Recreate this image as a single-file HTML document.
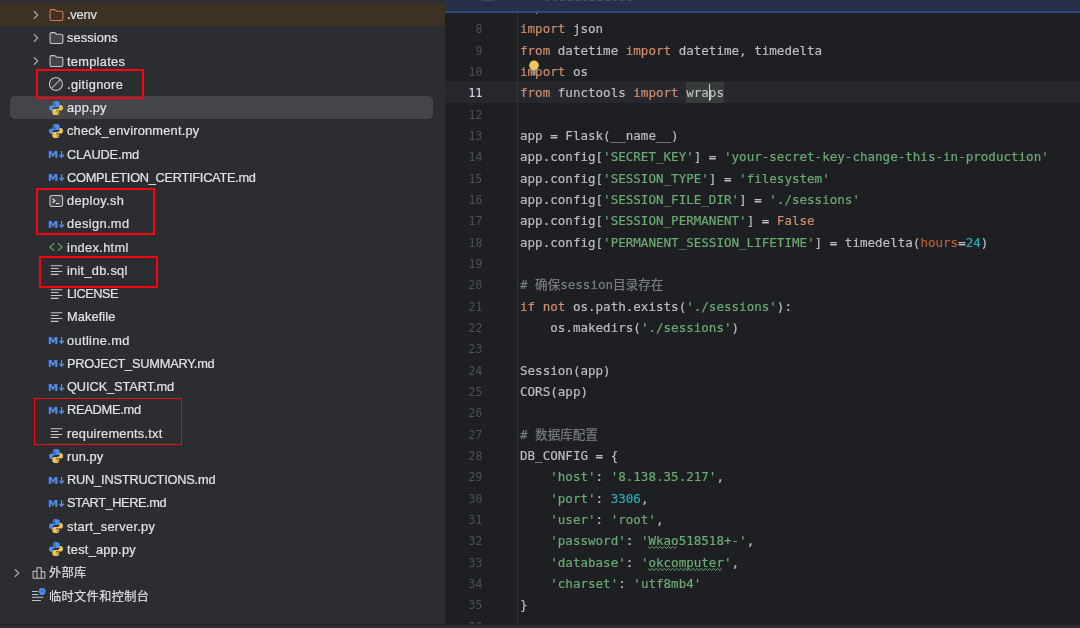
<!DOCTYPE html>
<html lang="zh-CN">
<head>
<meta charset="utf-8">
<title>app.py</title>
<style>
html,body{margin:0;padding:0;}
body{width:1080px;height:628px;overflow:hidden;position:relative;background:#2b2d30;
 font-family:"Liberation Sans","Noto Sans CJK SC",sans-serif;}
.abs{position:absolute;}
#tree{position:absolute;left:0;top:0;width:445px;height:628px;background:#2b2d30;overflow:hidden;}
#editor{position:absolute;left:445px;top:0;width:635px;height:628px;background:#1e1f22;overflow:hidden;}
.row{position:absolute;left:0;width:445px;height:23.25px;}
.row svg{position:absolute;top:3.625px;overflow:visible;}
.row span{position:absolute;top:0.1px;line-height:23.25px;font-size:12.8px;color:#dfe1e5;white-space:nowrap;-webkit-text-stroke:0.22px #dfe1e5;will-change:transform;}
.row span.cjk{font-size:12.200px;letter-spacing:0.350px;-webkit-text-stroke:0.150px #dfe1e5;top:1.300px;}
.box{position:absolute;border:2.200px solid #fc0010;box-sizing:border-box;}
.ln{position:absolute;left:0;width:37.400px;text-align:right;font-family:"DejaVu Sans Mono","Liberation Mono",monospace;font-size:11.400px;letter-spacing:0.150px;color:#4b5059;height:21.333px;line-height:21.333px;margin-top:1.8px;will-change:transform;}
.cl{position:absolute;left:75.3px;height:21.333px;line-height:21.333px;margin-top:0.6px;white-space:pre;font-family:"DejaVu Sans Mono","Liberation Mono","Noto Sans CJK SC",monospace;font-size:12.558px;color:#bcbec4;-webkit-text-stroke:0.180px;will-change:transform;}
.k{color:#cf8e6d}.s{color:#6aab73}.n{color:#2aacb8}.c{color:#7a7e85}.p{color:#ba6134}
.t{position:relative;display:inline-block;color:#6aab73}
.t svg{position:absolute;left:0;top:16.100px;overflow:visible}
</style>
</head>
<body>
<div id="tree">
<div class="abs" style="left:0;top:2.900px;width:445px;height:23px;background:#3d3124;"></div>
<div class="abs" style="left:9.600px;top:96.300px;width:423.400px;height:22.700px;background:#43454a;border-radius:5px;"></div>
<div class="row" style="top:3.03px"><svg style="left:27.6px" width="16" height="16" viewBox="0 0 16 16"><path d="M5.900 4.250L9.700 8 5.900 11.750" fill="none" stroke="#a3a6ad" stroke-width="1.250"/></svg><svg style="left:48.60px" width="16" height="16" viewBox="0 0 16 16"><path d="M1.05 4.2c0-.9.7-1.6 1.6-1.6h2.6c.45 0 .9.2 1.2.5l.9.9c.15.15.35.25.55.25h4.35c.9 0 1.6.7 1.6 1.6v6.05c0 .9-.7 1.6-1.6 1.6H2.65c-.9 0-1.6-.7-1.6-1.6z" fill="#432f28" stroke="#c97c50" stroke-width="1.1"/></svg><span style="left:66.7px;letter-spacing:-0.202px">.venv</span></div>
<div class="row" style="top:26.27px"><svg style="left:27.6px" width="16" height="16" viewBox="0 0 16 16"><path d="M5.900 4.250L9.700 8 5.900 11.750" fill="none" stroke="#a3a6ad" stroke-width="1.250"/></svg><svg style="left:48.60px" width="16" height="16" viewBox="0 0 16 16"><path d="M1.05 4.2c0-.9.7-1.6 1.6-1.6h2.6c.45 0 .9.2 1.2.5l.9.9c.15.15.35.25.55.25h4.35c.9 0 1.6.7 1.6 1.6v6.05c0 .9-.7 1.6-1.6 1.6H2.65c-.9 0-1.6-.7-1.6-1.6z" fill="#43454a" stroke="#c3c6cc" stroke-width="1.1"/></svg><span style="left:66.7px;letter-spacing:0.116px">sessions</span></div>
<div class="row" style="top:49.52px"><svg style="left:27.6px" width="16" height="16" viewBox="0 0 16 16"><path d="M5.900 4.250L9.700 8 5.900 11.750" fill="none" stroke="#a3a6ad" stroke-width="1.250"/></svg><svg style="left:48.60px" width="16" height="16" viewBox="0 0 16 16"><path d="M1.05 4.2c0-.9.7-1.6 1.6-1.6h2.6c.45 0 .9.2 1.2.5l.9.9c.15.15.35.25.55.25h4.35c.9 0 1.6.7 1.6 1.6v6.05c0 .9-.7 1.6-1.6 1.6H2.65c-.9 0-1.6-.7-1.6-1.6z" fill="#43454a" stroke="#c3c6cc" stroke-width="1.1"/></svg><span style="left:66.7px;letter-spacing:0.293px">templates</span></div>
<div class="row" style="top:72.78px"><svg style="left:47.75px" width="16" height="16" viewBox="0 0 16 16"><circle cx="7.9" cy="8" r="6.5" fill="#36383c" stroke="#c3c6cc" stroke-width="1.05"/><path d="M3.4 12.5L12.4 3.5" stroke="#c3c6cc" stroke-width="1.05"/></svg><span style="left:66.7px;letter-spacing:0.350px">.gitignore</span></div>
<div class="row" style="top:96.03px"><svg style="left:47.75px" width="16" height="16" viewBox="0 0 16 16"><path d="M7.8 1c-2.3 0-3 1-3 2.100v1.700h3.200v.600H3.300C1.900 5.400 1 6.500 1 8.100c0 1.700.9 2.800 2.200 2.800h1.400V9.200c0-1.300 1.100-2.300 2.400-2.300h2.800c1.100 0 1.900-.9 1.900-1.900V3.100C11.700 2 10.600 1 7.800 1z" fill="#4a8df6"/><circle cx="6.200" cy="2.900" r=".7" fill="#2b2d30"/><path d="M8.200 15c2.300 0 3-1 3-2.100v-1.700H8v-.6h4.700c1.400 0 2.300-1.100 2.300-2.700 0-1.700-.9-2.800-2.200-2.800h-1.400v1.700c0 1.300-1.100 2.300-2.400 2.300H6.200c-1.100 0-1.900.9-1.900 1.900v1.900c0 1.100 1.100 2.100 3.900 2.100z" fill="#f0c356"/><circle cx="9.800" cy="13.100" r=".7" fill="#2b2d30"/></svg><span style="left:66.7px;letter-spacing:0.207px">app.py</span></div>
<div class="row" style="top:119.28px"><svg style="left:47.75px" width="16" height="16" viewBox="0 0 16 16"><path d="M7.8 1c-2.3 0-3 1-3 2.100v1.700h3.200v.600H3.300C1.900 5.400 1 6.500 1 8.100c0 1.700.9 2.800 2.200 2.800h1.400V9.200c0-1.300 1.100-2.300 2.400-2.300h2.800c1.100 0 1.900-.9 1.900-1.900V3.100C11.700 2 10.600 1 7.800 1z" fill="#4a8df6"/><circle cx="6.200" cy="2.900" r=".7" fill="#2b2d30"/><path d="M8.200 15c2.300 0 3-1 3-2.100v-1.700H8v-.6h4.700c1.400 0 2.300-1.100 2.300-2.700 0-1.700-.9-2.800-2.200-2.800h-1.400v1.700c0 1.300-1.100 2.300-2.400 2.300H6.200c-1.100 0-1.900.9-1.900 1.900v1.900c0 1.100 1.100 2.100 3.900 2.100z" fill="#f0c356"/><circle cx="9.800" cy="13.100" r=".7" fill="#2b2d30"/></svg><span style="left:66.7px;letter-spacing:0.218px">check_environment.py</span></div>
<div class="row" style="top:142.53px"><svg style="left:48.60px" width="16" height="16" viewBox="0 0 16 16"><text transform="translate(-0.95 11.85) scale(1.12 1)" font-family="DejaVu Sans, Liberation Sans, sans-serif" font-weight="700" font-size="9.200" fill="#4f8df5">M</text><path d="M12.600 4.900v6.300M10.300 8.800l2.300 2.400 2.300-2.400" fill="none" stroke="#4f8df5" stroke-width="1.300"/></svg><span style="left:66.7px;letter-spacing:-0.152px">CLAUDE.md</span></div>
<div class="row" style="top:165.78px"><svg style="left:48.60px" width="16" height="16" viewBox="0 0 16 16"><text transform="translate(-0.95 11.85) scale(1.12 1)" font-family="DejaVu Sans, Liberation Sans, sans-serif" font-weight="700" font-size="9.200" fill="#4f8df5">M</text><path d="M12.600 4.900v6.300M10.300 8.800l2.300 2.400 2.300-2.400" fill="none" stroke="#4f8df5" stroke-width="1.300"/></svg><span style="left:66.7px;letter-spacing:-0.285px">COMPLETION_CERTIFICATE.md</span></div>
<div class="row" style="top:189.03px"><svg style="left:47.75px" width="16" height="16" viewBox="0 0 16 16"><rect x="1.950" y="2.450" width="12.650" height="11.100" rx="2.200" fill="#43454a" stroke="#c3c6cc" stroke-width="1.100"/><path d="M4.600 5.700l2.300 2L4.600 9.700M7.900 10.500h3.400" fill="none" stroke="#e2e4e8" stroke-width="1.200"/></svg><span style="left:66.7px;letter-spacing:0.371px">deploy.sh</span></div>
<div class="row" style="top:212.28px"><svg style="left:48.60px" width="16" height="16" viewBox="0 0 16 16"><text transform="translate(-0.95 11.85) scale(1.12 1)" font-family="DejaVu Sans, Liberation Sans, sans-serif" font-weight="700" font-size="9.200" fill="#4f8df5">M</text><path d="M12.600 4.900v6.300M10.300 8.800l2.300 2.400 2.300-2.400" fill="none" stroke="#4f8df5" stroke-width="1.300"/></svg><span style="left:66.7px;letter-spacing:0.371px">design.md</span></div>
<div class="row" style="top:235.53px"><svg style="left:48.00px" width="16" height="16" viewBox="0 0 16 16"><path d="M6.200 4.300L1.800 8l4.400 3.700M9.800 4.300L14.200 8l-4.400 3.700" fill="none" stroke="#5a9a5f" stroke-width="1.250"/></svg><span style="left:66.7px;letter-spacing:0.330px">index.html</span></div>
<div class="row" style="top:258.77px"><svg style="left:48.50px" width="16" height="16" viewBox="0 0 16 16"><path d="M1.800 3.650h11.500M1.800 6.550h7.700M1.800 9.450h11.500M1.800 12.350h7.700" fill="none" stroke="#c3c6cc" stroke-width="1.050"/></svg><span style="left:66.7px;letter-spacing:0.270px">init_db.sql</span></div>
<div class="row" style="top:282.02px"><svg style="left:48.50px" width="16" height="16" viewBox="0 0 16 16"><path d="M1.800 3.650h11.500M1.800 6.550h7.700M1.800 9.450h11.500M1.800 12.350h7.700" fill="none" stroke="#c3c6cc" stroke-width="1.050"/></svg><span style="left:66.7px;letter-spacing:-0.555px">LICENSE</span></div>
<div class="row" style="top:305.27px"><svg style="left:48.50px" width="16" height="16" viewBox="0 0 16 16"><path d="M1.800 3.650h11.500M1.800 6.550h7.700M1.800 9.450h11.500M1.800 12.350h7.700" fill="none" stroke="#c3c6cc" stroke-width="1.050"/></svg><span style="left:66.7px;letter-spacing:0.103px">Makefile</span></div>
<div class="row" style="top:328.52px"><svg style="left:48.60px" width="16" height="16" viewBox="0 0 16 16"><text transform="translate(-0.95 11.85) scale(1.12 1)" font-family="DejaVu Sans, Liberation Sans, sans-serif" font-weight="700" font-size="9.200" fill="#4f8df5">M</text><path d="M12.600 4.900v6.300M10.300 8.800l2.300 2.400 2.300-2.400" fill="none" stroke="#4f8df5" stroke-width="1.300"/></svg><span style="left:66.7px;letter-spacing:0.370px">outline.md</span></div>
<div class="row" style="top:351.77px"><svg style="left:48.60px" width="16" height="16" viewBox="0 0 16 16"><text transform="translate(-0.95 11.85) scale(1.12 1)" font-family="DejaVu Sans, Liberation Sans, sans-serif" font-weight="700" font-size="9.200" fill="#4f8df5">M</text><path d="M12.600 4.900v6.300M10.300 8.800l2.300 2.400 2.300-2.400" fill="none" stroke="#4f8df5" stroke-width="1.300"/></svg><span style="left:66.7px;letter-spacing:-0.233px">PROJECT_SUMMARY.md</span></div>
<div class="row" style="top:375.02px"><svg style="left:48.60px" width="16" height="16" viewBox="0 0 16 16"><text transform="translate(-0.95 11.85) scale(1.12 1)" font-family="DejaVu Sans, Liberation Sans, sans-serif" font-weight="700" font-size="9.200" fill="#4f8df5">M</text><path d="M12.600 4.900v6.300M10.300 8.800l2.300 2.400 2.300-2.400" fill="none" stroke="#4f8df5" stroke-width="1.300"/></svg><span style="left:66.7px;letter-spacing:-0.090px">QUICK_START.md</span></div>
<div class="row" style="top:398.27px"><svg style="left:48.60px" width="16" height="16" viewBox="0 0 16 16"><text transform="translate(-0.95 11.85) scale(1.12 1)" font-family="DejaVu Sans, Liberation Sans, sans-serif" font-weight="700" font-size="9.200" fill="#4f8df5">M</text><path d="M12.600 4.900v6.300M10.300 8.800l2.300 2.400 2.300-2.400" fill="none" stroke="#4f8df5" stroke-width="1.300"/></svg><span style="left:66.7px;letter-spacing:-0.247px">README.md</span></div>
<div class="row" style="top:421.52px"><svg style="left:48.50px" width="16" height="16" viewBox="0 0 16 16"><path d="M1.800 3.650h11.500M1.800 6.550h7.700M1.800 9.450h11.500M1.800 12.350h7.700" fill="none" stroke="#c3c6cc" stroke-width="1.050"/></svg><span style="left:66.7px;letter-spacing:0.234px">requirements.txt</span></div>
<div class="row" style="top:444.77px"><svg style="left:47.75px" width="16" height="16" viewBox="0 0 16 16"><path d="M7.8 1c-2.3 0-3 1-3 2.100v1.700h3.200v.600H3.300C1.900 5.400 1 6.500 1 8.100c0 1.700.9 2.800 2.200 2.800h1.400V9.200c0-1.300 1.100-2.300 2.400-2.300h2.800c1.100 0 1.900-.9 1.900-1.900V3.100C11.700 2 10.600 1 7.800 1z" fill="#4a8df6"/><circle cx="6.200" cy="2.900" r=".7" fill="#2b2d30"/><path d="M8.200 15c2.300 0 3-1 3-2.100v-1.700H8v-.6h4.700c1.400 0 2.300-1.100 2.300-2.700 0-1.700-.9-2.800-2.200-2.800h-1.400v1.700c0 1.300-1.100 2.300-2.400 2.300H6.200c-1.100 0-1.900.9-1.900 1.900v1.900c0 1.100 1.100 2.100 3.900 2.100z" fill="#f0c356"/><circle cx="9.800" cy="13.100" r=".7" fill="#2b2d30"/></svg><span style="left:66.7px;letter-spacing:0.126px">run.py</span></div>
<div class="row" style="top:468.02px"><svg style="left:48.60px" width="16" height="16" viewBox="0 0 16 16"><text transform="translate(-0.95 11.85) scale(1.12 1)" font-family="DejaVu Sans, Liberation Sans, sans-serif" font-weight="700" font-size="9.200" fill="#4f8df5">M</text><path d="M12.600 4.900v6.300M10.300 8.800l2.300 2.400 2.300-2.400" fill="none" stroke="#4f8df5" stroke-width="1.300"/></svg><span style="left:66.7px;letter-spacing:-0.200px">RUN_INSTRUCTIONS.md</span></div>
<div class="row" style="top:491.27px"><svg style="left:48.60px" width="16" height="16" viewBox="0 0 16 16"><text transform="translate(-0.95 11.85) scale(1.12 1)" font-family="DejaVu Sans, Liberation Sans, sans-serif" font-weight="700" font-size="9.200" fill="#4f8df5">M</text><path d="M12.600 4.900v6.300M10.300 8.800l2.300 2.400 2.300-2.400" fill="none" stroke="#4f8df5" stroke-width="1.300"/></svg><span style="left:66.7px;letter-spacing:-0.439px">START_HERE.md</span></div>
<div class="row" style="top:514.52px"><svg style="left:47.75px" width="16" height="16" viewBox="0 0 16 16"><path d="M7.8 1c-2.3 0-3 1-3 2.100v1.700h3.200v.600H3.300C1.900 5.400 1 6.500 1 8.100c0 1.700.9 2.800 2.200 2.800h1.400V9.200c0-1.300 1.100-2.300 2.400-2.300h2.800c1.100 0 1.900-.9 1.900-1.900V3.100C11.700 2 10.600 1 7.800 1z" fill="#4a8df6"/><circle cx="6.200" cy="2.900" r=".7" fill="#2b2d30"/><path d="M8.200 15c2.300 0 3-1 3-2.100v-1.700H8v-.6h4.700c1.400 0 2.300-1.100 2.300-2.700 0-1.700-.9-2.800-2.200-2.800h-1.400v1.700c0 1.300-1.100 2.300-2.400 2.300H6.200c-1.100 0-1.900.9-1.900 1.900v1.900c0 1.100 1.100 2.100 3.900 2.100z" fill="#f0c356"/><circle cx="9.800" cy="13.100" r=".7" fill="#2b2d30"/></svg><span style="left:66.7px;letter-spacing:0.283px">start_server.py</span></div>
<div class="row" style="top:537.77px"><svg style="left:47.75px" width="16" height="16" viewBox="0 0 16 16"><path d="M7.8 1c-2.3 0-3 1-3 2.100v1.700h3.200v.600H3.300C1.900 5.400 1 6.500 1 8.100c0 1.700.9 2.800 2.200 2.800h1.400V9.200c0-1.300 1.100-2.300 2.400-2.300h2.800c1.100 0 1.900-.9 1.900-1.900V3.100C11.700 2 10.600 1 7.800 1z" fill="#4a8df6"/><circle cx="6.200" cy="2.900" r=".7" fill="#2b2d30"/><path d="M8.200 15c2.300 0 3-1 3-2.100v-1.700H8v-.6h4.700c1.400 0 2.300-1.100 2.300-2.700 0-1.700-.9-2.800-2.200-2.800h-1.400v1.700c0 1.300-1.100 2.300-2.400 2.300H6.200c-1.100 0-1.900.9-1.900 1.900v1.900c0 1.100 1.100 2.100 3.900 2.100z" fill="#f0c356"/><circle cx="9.800" cy="13.100" r=".7" fill="#2b2d30"/></svg><span style="left:66.7px;letter-spacing:0.252px">test_app.py</span></div>
<div class="row" style="top:561.02px"><svg style="left:9.3px" width="16" height="16" viewBox="0 0 16 16"><path d="M5.900 4.250L9.700 8 5.900 11.750" fill="none" stroke="#a3a6ad" stroke-width="1.250"/></svg><svg style="left:30.60px" width="16" height="16" viewBox="0 0 16 16"><path d="M2.100 13.200V6.200h3.900v7M6 13.200V2.800h4.200v10.400M10.200 6.600h2.500a1.200 1.200 0 0 1 1.200 1.200v5.400M2.100 13.200h11.800" fill="none" stroke="#c3c6cc" stroke-width="1.050"/></svg><span class="cjk" style="left:48.9px">外部库</span></div>
<div class="row" style="top:584.27px"><svg style="left:30.30px" width="16" height="16" viewBox="0 0 16 16"><path d="M1.900 3.500h6M1.900 6.400h6.500M1.900 9.300h11.600M1.900 12.400h9" fill="none" stroke="#c3c6cc" stroke-width="1.050"/><circle cx="12.200" cy="3.500" r="3.400" fill="#4a8df6"/><path d="M12.200 1.700v2l1.300.8" fill="none" stroke="#2b2d30" stroke-width=".8"/></svg><span class="cjk" style="left:48.5px">临时文件和控制台</span></div>
<div class="box" style="left:35.7px;top:69.2px;width:108.2px;height:30.2px;border-width:2.2px"></div>
<div class="box" style="left:35.8px;top:187.8px;width:119.0px;height:47.5px;border-width:2.2px"></div>
<div class="box" style="left:38.6px;top:255.7px;width:119.7px;height:32.4px;border-width:2.3px"></div>
<div class="box" style="left:34.2px;top:397.5px;width:148.2px;height:47.5px;border-width:1.85px"></div>
</div>
<div id="editor">
<div class="abs" style="left:0;top:81.18px;width:635px;height:22.03px;background:#26282e;"></div>
<div class="abs" style="left:240.900px;top:82.08px;width:37.800px;height:20.73px;background:#373b39;"></div>
<div class="abs" style="left:72px;top:13px;width:1px;height:615px;background:#313438;"></div>
<div class="abs" style="left:0;top:0;width:635px;height:14.200px;overflow:hidden"><div class="ln" style="top:-3.75px">7</div><div class="cl" style="top:-3.75px"><span class="k">import</span> hashlib</div>
</div><div class="ln" style="top:17.58px">8</div><div class="cl" style="top:17.58px"><span class="k">import</span> json</div>
<div class="ln" style="top:38.92px">9</div><div class="cl" style="top:38.92px"><span class="k">from</span> datetime <span class="k">import</span> datetime, timedelta</div>
<div class="ln" style="top:60.25px">10</div><div class="cl" style="top:60.25px"><span class="k">import</span> os</div>
<div class="ln" style="top:81.58px;color:#cdd0d6;-webkit-text-stroke:0.2px">11</div><div class="cl" style="top:81.58px"><span class="k">from</span> functools <span class="k">import</span> wraps</div>
<div class="ln" style="top:102.92px">12</div>
<div class="ln" style="top:124.25px">13</div><div class="cl" style="top:124.25px">app = Flask(__name__)</div>
<div class="ln" style="top:145.58px">14</div><div class="cl" style="top:145.58px">app.config[<span class="s">'SECRET_KEY'</span>] = <span class="s">'your-secret-key-change-this-in-production'</span></div>
<div class="ln" style="top:166.91px">15</div><div class="cl" style="top:166.91px">app.config[<span class="s">'SESSION_TYPE'</span>] = <span class="s">'filesystem'</span></div>
<div class="ln" style="top:188.25px">16</div><div class="cl" style="top:188.25px">app.config[<span class="s">'SESSION_FILE_DIR'</span>] = <span class="s">'./sessions'</span></div>
<div class="ln" style="top:209.58px">17</div><div class="cl" style="top:209.58px">app.config[<span class="s">'SESSION_PERMANENT'</span>] = <span class="k">False</span></div>
<div class="ln" style="top:230.91px">18</div><div class="cl" style="top:230.91px">app.config[<span class="s">'PERMANENT_SESSION_LIFETIME'</span>] = timedelta(<span class="p">hours</span>=<span class="n">24</span>)</div>
<div class="ln" style="top:252.25px">19</div>
<div class="ln" style="top:273.58px">20</div><div class="cl" style="top:273.58px"><span class="c"># 确保session目录存在</span></div>
<div class="ln" style="top:294.91px">21</div><div class="cl" style="top:294.91px"><span class="k">if not</span> os.path.exists(<span class="s">'./sessions'</span>):</div>
<div class="ln" style="top:316.25px">22</div><div class="cl" style="top:316.25px">    os.makedirs(<span class="s">'./sessions'</span>)</div>
<div class="ln" style="top:337.58px">23</div>
<div class="ln" style="top:358.91px">24</div><div class="cl" style="top:358.91px">Session(app)</div>
<div class="ln" style="top:380.24px">25</div><div class="cl" style="top:380.24px">CORS(app)</div>
<div class="ln" style="top:401.58px">26</div>
<div class="ln" style="top:422.91px">27</div><div class="cl" style="top:422.91px"><span class="c"># 数据库配置</span></div>
<div class="ln" style="top:444.24px">28</div><div class="cl" style="top:444.24px">DB_CONFIG = {</div>
<div class="ln" style="top:465.58px">29</div><div class="cl" style="top:465.58px">    <span class="s">'host'</span>: <span class="s">'8.138.35.217'</span>,</div>
<div class="ln" style="top:486.91px">30</div><div class="cl" style="top:486.91px">    <span class="s">'port'</span>: <span class="n">3306</span>,</div>
<div class="ln" style="top:508.24px">31</div><div class="cl" style="top:508.24px">    <span class="s">'user'</span>: <span class="s">'root'</span>,</div>
<div class="ln" style="top:529.58px">32</div><div class="cl" style="top:529.58px">    <span class="s">'password'</span>: <span class="s">'</span><span class="t">Wkao<svg width="30.2" height="3" viewBox="0 0 30.2 3"><path d="M0.0 0.3 L2.0 2.6 L4.1 0.3 L6.1 2.6 L8.2 0.3 L10.2 2.6 L12.3 0.3 L14.4 2.6 L16.4 0.3 L18.5 2.6 L20.5 0.3 L22.6 2.6 L24.6 0.3 L26.7 2.6 L28.7 0.3" fill="none" stroke="#62a265" stroke-width="1" stroke-linejoin="round"/></svg></span><span class="s">518518+-'</span>,</div>
<div class="ln" style="top:550.91px">33</div><div class="cl" style="top:550.91px">    <span class="s">'database'</span>: <span class="s">'</span><span class="t">okcomputer<svg width="75.6" height="3" viewBox="0 0 75.6 3"><path d="M0.0 0.3 L2.0 2.6 L4.1 0.3 L6.1 2.6 L8.2 0.3 L10.2 2.6 L12.3 0.3 L14.4 2.6 L16.4 0.3 L18.5 2.6 L20.5 0.3 L22.6 2.6 L24.6 0.3 L26.7 2.6 L28.7 0.3 L30.8 2.6 L32.8 0.3 L34.9 2.6 L36.9 0.3 L38.9 2.6 L41.0 0.3 L43.0 2.6 L45.1 0.3 L47.1 2.6 L49.2 0.3 L51.2 2.6 L53.3 0.3 L55.3 2.6 L57.4 0.3 L59.4 2.6 L61.5 0.3 L63.5 2.6 L65.6 0.3 L67.6 2.6 L69.7 0.3 L71.7 2.6 L73.8 0.3" fill="none" stroke="#62a265" stroke-width="1" stroke-linejoin="round"/></svg></span><span class="s">'</span>,</div>
<div class="ln" style="top:572.24px">34</div><div class="cl" style="top:572.24px">    <span class="s">'charset'</span>: <span class="s">'utf8mb4'</span></div>
<div class="ln" style="top:593.57px">35</div><div class="cl" style="top:593.57px">}</div>
<div class="ln" style="top:614.91px">36</div>
<div class="abs" style="left:263.900px;top:83.78px;width:1.400px;height:17.300px;background:#ced0d6;"></div>
<svg class="abs" style="left:83px;top:60px" width="12" height="16" viewBox="0 0 12 16"><rect x="4.300" y="10" width="3.400" height="4.800" rx=".6" fill="#a7a9ae"/><path d="M4.300 11.600h3.400M4.300 13.200h3.400" stroke="#5a5d63" stroke-width=".6"/><circle cx="6" cy="5.400" r="4.850" fill="#f2c55c"/></svg>
<div class="abs" style="left:0;top:0;width:635px;height:10.800px;background:#25304b;"></div>
<div class="abs" style="left:0;top:10.600px;width:635px;height:2.300px;background:#30497a;"></div>
<div class="abs" style="left:100px;top:0;width:91px;height:0.800px;background:repeating-linear-gradient(90deg,rgba(190,196,212,0.200) 0 4.500px,transparent 4.500px 7.545px);"></div>
<div class="abs" style="left:37px;top:0;width:12px;height:0.800px;background:rgba(150,158,178,0.200);"></div>
</div>
<div class="abs" style="left:0;top:624px;width:1080px;height:4px;background:#2b2d30;"></div>
<div class="abs" style="left:0;top:623.700px;width:1080px;height:1.100px;background:#1e1f22;"></div>
</body>
</html>
